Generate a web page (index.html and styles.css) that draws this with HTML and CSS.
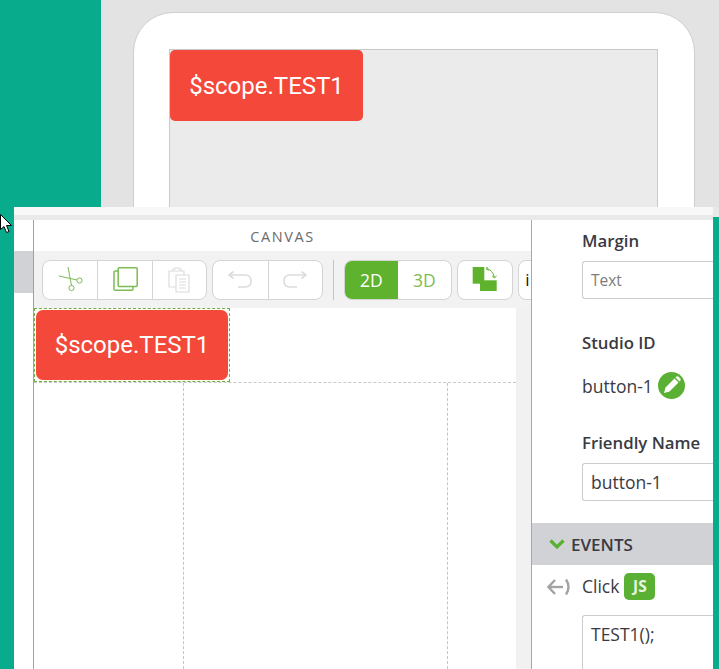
FILE: index.html
```html
<!DOCTYPE html>
<html lang="en">
<head>
<meta charset="UTF-8">
<meta name="viewport" content="width=device-width, initial-scale=1.0">
<title>Canvas</title>
<link rel="stylesheet" href="styles.css">
</head>
<body>

<div class="preview">
  <div class="preview-side"></div>
  <div class="preview-stage">
    <div class="device">
      <div class="screen">
        <div class="red-button">$scope.TEST1</div>
      </div>
    </div>
  </div>
</div>

<div class="studio">
  <div class="edge-left"></div>

  <div class="window">
    <div class="window-top"></div>
    <div class="window-body">

      <div class="rail">
        <div class="rail-item"></div>
      </div>

      <div class="canvas-panel">
        <div class="canvas-title">CANVAS</div>
        <div class="toolbar">
          <div class="tool-group">
            <div class="tool">
              <svg width="26" height="26" viewBox="0 0 26 26" fill="none" stroke="#7dbb55" stroke-width="1">
                <path d="M11 0 L14.5 18.5"/>
                <path d="M1.8 9 L20 13"/>
                <circle cx="14.5" cy="21" r="2.6"/>
                <circle cx="22.5" cy="13.5" r="2.6"/>
              </svg>
            </div>
            <div class="tool">
              <svg width="26" height="26" viewBox="0 0 26 26" fill="none" stroke="#7dbb55" stroke-width="1.5">
                <path d="M6 4 H3 Q2 4 2 5 V22 Q2 23.3 3.5 23.3 H20 Q21 23.3 21 22 V19.5"/>
                <rect x="6.2" y="0.8" width="19" height="18.7" rx="1"/>
              </svg>
            </div>
            <div class="tool">
              <svg width="22" height="26" viewBox="0 0 22 26" fill="none" stroke="#dcdcdc" stroke-width="1.2">
                <path d="M5 4 H1 V20 H8"/>
                <path d="M5 4 V2 H7 V1 H11 V2 H13 V4 Z"/>
                <path d="M13 4 H16 V8"/>
                <path d="M8 8 H21 V25 H8 Z"/>
                <path d="M11 12 H18 M11 15 H18 M11 18 H18 M11 21 H18"/>
              </svg>
            </div>
          </div>

          <div class="tool-group">
            <div class="tool">
              <svg width="24" height="18" viewBox="0 0 24 18" fill="none" stroke="#dcdcdc" stroke-width="1.6">
                <path d="M5.5 0.5 L1 4 L5.5 7.5"/>
                <path d="M1 4 H17 Q23 4 23 10 Q23 16 17 16 H10"/>
              </svg>
            </div>
            <div class="tool">
              <svg width="24" height="18" viewBox="0 0 24 18" fill="none" stroke="#dcdcdc" stroke-width="1.6">
                <path d="M18.5 0.5 L23 4 L18.5 7.5"/>
                <path d="M23 4 H7 Q1 4 1 10 Q1 16 7 16 H14"/>
              </svg>
            </div>
          </div>

          <div class="tool-sep"></div>

          <div class="mode-group">
            <div class="mode mode-on">2D</div>
            <div class="mode">3D</div>
          </div>

          <div class="tool-group">
            <div class="tool">
              <svg width="26" height="26" viewBox="0 0 26 26">
                <rect x="0.7" y="0" width="11.6" height="16.7" fill="#5fb22d"/>
                <rect x="8" y="13.3" width="16.7" height="10.7" fill="#5fb22d"/>
                <path d="M14 1.5 Q20.5 2.5 22.5 10.5" fill="none" stroke="#5fb22d" stroke-width="1"/>
                <path d="M14 1.5 L16.5 -0.5 M14 1.5 L16.5 3.5 M22.5 11 L20 8.8 M22.5 11 L24.6 8.8" stroke="#5fb22d" stroke-width="1"/>
              </svg>
            </div>
          </div>

          <div class="tool-cut">i</div>
        </div>

        <div class="canvas-wrap">
          <div class="canvas">
            <div class="canvas-head">
              <div class="selected">
                <div class="red-button">$scope.TEST1</div>
              </div>
            </div>
            <div class="canvas-cols">
              <div class="col-a"></div>
              <div class="col-b"></div>
              <div class="col-c"></div>
            </div>
          </div>
          <div class="scroll-strip"></div>
        </div>
      </div>

      <div class="props">
        <div class="prop prop-margin">
          <div class="prop-label">Margin</div>
          <div class="prop-input placeholder">Text</div>
        </div>

        <div class="prop prop-id">
          <div class="prop-label">Studio ID</div>
          <div class="id-row">
            <span>button-1</span>
            <svg class="pencil" width="27" height="27" viewBox="0 0 27 27">
              <circle cx="13.5" cy="13.5" r="13.5" fill="#5ab032"/>
              <path d="M6 21 L7.5 15.5 L16.5 6.5 L20.5 10.5 L11.5 19.5 Z" fill="#fff"/>
              <path d="M17.5 5.5 L18.5 4.5 Q19.5 4 20.5 4.8 L22.2 6.5 Q23 7.5 22.5 8.5 L21.5 9.5 Z" fill="#fff"/>
            </svg>
          </div>
        </div>

        <div class="prop prop-name">
          <div class="prop-label">Friendly Name</div>
          <div class="prop-input">button-1</div>
        </div>

        <div class="events-bar">
          <svg width="16" height="11" viewBox="0 0 16 11" fill="none" stroke="#5ab032" stroke-width="3.2">
            <path d="M1.5 1.5 L8 8 L14.5 1.5"/>
          </svg>
          <span>EVENTS</span>
        </div>

        <div class="event-row">
          <svg class="event-icon" width="25" height="18" viewBox="0 0 25 18" fill="none" stroke="#a3a3a3" stroke-width="2.4">
            <path d="M8 2 L1.5 9 L8 16"/>
            <path d="M2 9 H16"/>
            <path d="M19 1.5 Q24 9 19 16.5"/>
          </svg>
          <span>Click</span>
          <div class="js-badge">JS</div>
        </div>

        <div class="code-box">TEST1();</div>
      </div>

    </div>
  </div>

  <div class="edge-right">
    <div class="edge-right-top"></div>
  </div>
</div>

<svg class="cursor" width="13" height="20" viewBox="0 0 13 20">
  <path d="M0.5 0.5 V15.5 L4 12.5 L6.5 18.5 L9 17.5 L6.5 11.5 L11.5 11.5 Z" fill="#fff" stroke="#000" stroke-width="1"/>
</svg>

</body>
</html>
```

FILE: styles.css
```css
html, body {
  height: 100%;
}
body {
  margin: 0;
  height: 669px;
  overflow: hidden;
  display: flex;
  flex-direction: column;
  font-family: "Open Sans", Arial, sans-serif;
  color: #3a3a42;
  background-color: #08ac8c;
}
.cursor {
  position: absolute;
  left: 0;
  top: 214px;
}

/* preview on top */
.preview {
  height: 207px;
  flex: none;
  display: flex;
}
.preview-side {
  width: 101px;
  background-color: #08ac8c;
}
.preview-stage {
  flex: 1;
  background-color: #e3e3e3;
  padding: 12px 24px 0 32px;
  overflow: hidden;
}
.device {
  height: 230px;
  padding: 36px 36px 0 35px;
  background-color: #fff;
  border: solid 1px #cfcfcf;
  border-radius: 40px 40px 0 0;
}
.screen {
  height: 200px;
  background-color: #ebebeb;
  border: solid 1px #c9c9c9;
  border-bottom: none;
}
.red-button {
  width: 193px;
  height: 71px;
  display: flex;
  align-items: center;
  justify-content: center;
  background-color: #f3483a;
  color: #fff;
  border-radius: 5px;
  font-family: Roboto, Arial, sans-serif;
  font-size: 24px;
}

/* studio window */
.studio {
  flex: 1;
  display: flex;
  min-height: 0;
}
.edge-left {
  width: 14px;
  background-color: #08ac8c;
}
.edge-right {
  width: 6px;
  background-color: #08ac8c;
}
.edge-right-top {
  height: 10px;
  background-color: #e8e8e8;
}
.window {
  flex: 1;
  display: flex;
  flex-direction: column;
  background-color: #fff;
  min-width: 0;
}
.window-top {
  height: 8px;
  background-color: #f8f8f8;
  border-bottom: solid 5px #e9e9e9;
  flex: none;
}
.window-body {
  flex: 1;
  display: flex;
  min-height: 0;
}

.rail {
  width: 19px;
  padding-top: 31px;
  border-right: solid 1px #a0a0a0;
  flex: none;
}
.rail-item {
  height: 42px;
  background-color: #d0d2d6;
}

/* canvas column */
.canvas-panel {
  width: 497px;
  flex: none;
  display: flex;
  flex-direction: column;
  border-right: solid 1px #a8a8a8;
}
.canvas-title {
  height: 31px;
  line-height: 33px;
  text-align: center;
  font-size: 14.5px;
  letter-spacing: 1.6px;
  color: #6b6b6b;
}
.toolbar {
  height: 57px;
  flex: none;
  display: flex;
  align-items: center;
  gap: 5px;
  padding-left: 8px;
  background-color: #f2f2f2;
  overflow: hidden;
}
.tool-group, .mode-group {
  flex: none;
  display: flex;
  height: 40px;
  background-color: #fff;
  border: solid 1px #d4d4d4;
  border-radius: 8px;
  box-sizing: border-box;
  overflow: hidden;
}
.tool {
  width: 54.4px;
  box-sizing: border-box;
  display: flex;
  align-items: center;
  justify-content: center;
  border-left: solid 1px #d4d4d4;
}
.tool:first-child {
  border-left: none;
}
.tool-sep {
  flex: none;
  width: 1px;
  height: 40px;
  margin: 0 5px;
  background-color: #c4c4c4;
}
.mode {
  width: 53px;
  display: flex;
  align-items: center;
  justify-content: center;
  font-size: 17.5px;
  color: #7dbb55;
}
.mode-on {
  background-color: #5fb22d;
  color: #fff;
}
.tool-cut {
  flex: none;
  width: 40px;
  height: 40px;
  line-height: 38px;
  box-sizing: border-box;
  padding-left: 6px;
  background-color: #fff;
  border: solid 1px #d4d4d4;
  border-radius: 8px;
  color: #111;
  font-size: 17px;
}

.canvas-wrap {
  flex: 1;
  display: flex;
  min-height: 0;
}
.canvas {
  flex: 1;
  display: flex;
  flex-direction: column;
}
.scroll-strip {
  width: 15px;
  background-color: #f1f1f1;
}
.canvas-head {
  height: 74px;
  flex: none;
  border-bottom: dashed 1px #c9c9c9;
}
.selected {
  width: 196px;
  height: 74px;
  box-sizing: border-box;
  padding: 1px;
  border: dashed 1px #6fae4b;
  background-color: #fffdf3;
}
.selected .red-button {
  width: 192px;
  height: 70px;
  border-radius: 7px;
}
.canvas-cols {
  flex: 1;
  display: flex;
}
.col-a {
  width: 149px;
}
.col-b {
  width: 263px;
  border-left: dashed 1px #c4c4c4;
  border-right: dashed 1px #c4c4c4;
}
.col-c {
  flex: 1;
}

/* properties column */
.props {
  flex: 1;
  min-width: 0;
  overflow: hidden;
}
.prop {
  padding-left: 50px;
}
.prop-margin {
  padding-top: 9px;
}
.prop-id, .prop-name {
  padding-top: 32px;
}
.prop-label {
  font-size: 16.8px;
  font-weight: 600;
  line-height: 24px;
}
.prop-input {
  height: 38px;
  line-height: 36px;
  margin-top: 8px;
  margin-right: -2px;
  padding-left: 8px;
  box-sizing: border-box;
  background-color: #fff;
  border: solid 1px #ccc;
  border-right: none;
  border-radius: 3px 0 0 3px;
  font-size: 17.5px;
}
.placeholder {
  color: #7d7d7d;
  font-size: 15.5px;
}
.id-row {
  display: flex;
  align-items: center;
  gap: 5px;
  margin-top: 17px;
  height: 27px;
  font-size: 17.5px;
}
.events-bar {
  height: 42px;
  margin-top: 22px;
  display: flex;
  align-items: center;
  gap: 6px;
  padding-left: 17px;
  background-color: #d0d2d6;
  font-size: 17px;
  font-weight: 600;
}
.event-row {
  display: flex;
  align-items: center;
  height: 27px;
  margin-top: 8px;
  padding-left: 15px;
  font-size: 17.5px;
  line-height: 25px;
}
.event-icon {
  margin-right: 10px;
}
.js-badge {
  width: 31px;
  height: 27px;
  margin-left: 5px;
  display: flex;
  align-items: center;
  justify-content: center;
  background-color: #5ab032;
  color: #e9f5e2;
  border-radius: 5px;
  font-size: 15.5px;
  font-weight: 700;
}
.code-box {
  height: 80px;
  margin-top: 15px;
  margin-left: 50px;
  padding: 6px 8px;
  box-sizing: border-box;
  border: solid 1px #ccc;
  border-right: none;
  border-radius: 3px 0 0 0;
  font-size: 17.5px;
}
```
